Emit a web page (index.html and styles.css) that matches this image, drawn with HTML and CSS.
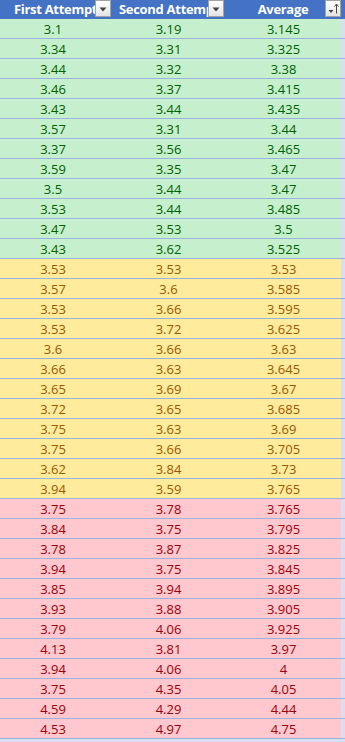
FILE: index.html
```html
<!DOCTYPE html>
<html>
<head>
<meta charset="utf-8">
<link rel="stylesheet" href="styles.css">
</head>
<body>
<div class="sheet">
  <div class="head">
    <div class="hcell c1">
      <span class="label">First Attempt</span>
      <span class="btn"><svg width="14" height="15" viewBox="0 0 14 15"><path d="M3.5 6.5h7l-3.5 4z" fill="#444"/></svg></span>
    </div>
    <div class="hcell c2">
      <span class="label">Second Attempt</span>
      <span class="btn"><svg width="14" height="15" viewBox="0 0 14 15"><path d="M3.5 6.5h7l-3.5 4z" fill="#444"/></svg></span>
    </div>
    <div class="hcell c3">
      <span class="label">Average</span>
      <span class="btn"><svg width="14" height="15" viewBox="0 0 14 15"><path d="M2.5 9h5l-2.5 3z" fill="#444"/><path d="M10.5 12.5V3.5" stroke="#444" stroke-width="1"/><path d="M8.5 5.5l2-2.5 2 2.5" fill="none" stroke="#444" stroke-width="1"/></svg></span>
    </div>
    <div class="hstrip"></div>
  </div>
  <div id="rows"></div>
</div>
<script src="app.js"></script>
</body>
</html>
```

FILE: app.js
```js
var data = [
 ["g","3.1","3.19","3.145"],["g","3.34","3.31","3.325"],["g","3.44","3.32","3.38"],["g","3.46","3.37","3.415"],
 ["g","3.43","3.44","3.435"],["g","3.57","3.31","3.44"],["g","3.37","3.56","3.465"],["g","3.59","3.35","3.47"],
 ["g","3.5","3.44","3.47"],["g","3.53","3.44","3.485"],["g","3.47","3.53","3.5"],["g","3.43","3.62","3.525"],
 ["y","3.53","3.53","3.53"],["y","3.57","3.6","3.585"],["y","3.53","3.66","3.595"],["y","3.53","3.72","3.625"],
 ["y","3.6","3.66","3.63"],["y","3.66","3.63","3.645"],["y","3.65","3.69","3.67"],["y","3.72","3.65","3.685"],
 ["y","3.75","3.63","3.69"],["y","3.75","3.66","3.705"],["y","3.62","3.84","3.73"],["y","3.94","3.59","3.765"],
 ["r","3.75","3.78","3.765"],["r","3.84","3.75","3.795"],["r","3.78","3.87","3.825"],["r","3.94","3.75","3.845"],
 ["r","3.85","3.94","3.895"],["r","3.93","3.88","3.905"],["r","3.79","4.06","3.925"],["r","4.13","3.81","3.97"],
 ["r","3.94","4.06","4"],["r","3.75","4.35","4.05"],["r","4.59","4.29","4.44"],["r","4.53","4.97","4.75"]
];
var host = document.getElementById("rows");
data.forEach(function (d) {
  var row = document.createElement("div");
  row.className = "row " + d[0];
  for (var i = 1; i <= 3; i++) {
    var c = document.createElement("div");
    c.className = "cell c" + i;
    c.textContent = d[i];
    row.appendChild(c);
  }
  var s = document.createElement("div");
  s.className = "strip";
  row.appendChild(s);
  host.appendChild(row);
});
```

FILE: styles.css
```css
html, body {
  margin: 0;
  padding: 0;
}
body {
  background: #d9dff0;
  width: 345px;
  height: 742px;
  overflow: hidden;
  font-family: "Open Sans", "Noto Sans", sans-serif;
  font-size: 13px;
}
.sheet {
  width: 345px;
}
.head {
  display: grid;
  grid-template-columns: 111px 115px 115px 4px;
  height: 19px;
  background: #4472c4;
  color: #fff;
  font-weight: bold;
}
.hcell {
  display: flex;
  align-items: flex-start;
  overflow: hidden;
}
.label {
  flex: 1;
  min-width: 0;
  overflow: hidden;
  white-space: nowrap;
  line-height: 19px;
  height: 19px;
  letter-spacing: -0.3px;
}
.hcell.c1 .label { padding-left: 14px; }
.hcell.c2 .label { padding-left: 8px; }
.hcell.c3 .label { padding-left: 15px; text-align: center; }
.hcell.c2 .btn { margin-right: 2px; }
.btn {
  flex: none;
  width: 14px;
  height: 15px;
  border: 1px solid #a3a3a3;
  background: linear-gradient(#ffffff, #e4e4e4);
  display: block;
}
.btn svg { display: block; }
.row {
  display: grid;
  grid-template-columns: 111px 115px 115px 4px;
  height: 20px;
  box-sizing: border-box;
  border-bottom: 1px solid #9db1de;
}
.cell {
  text-align: center;
  padding-top: 2px;
  line-height: 17px;
  white-space: nowrap;
}
.cell.c1 { padding-right: 5px; }
.strip { background: #d9dff0; }
.g { background: #c6efce; color: #006100; }
.y { background: #ffeb9c; color: #9c5700; }
.r { background: #ffc7ce; color: #9c0006; }
```
